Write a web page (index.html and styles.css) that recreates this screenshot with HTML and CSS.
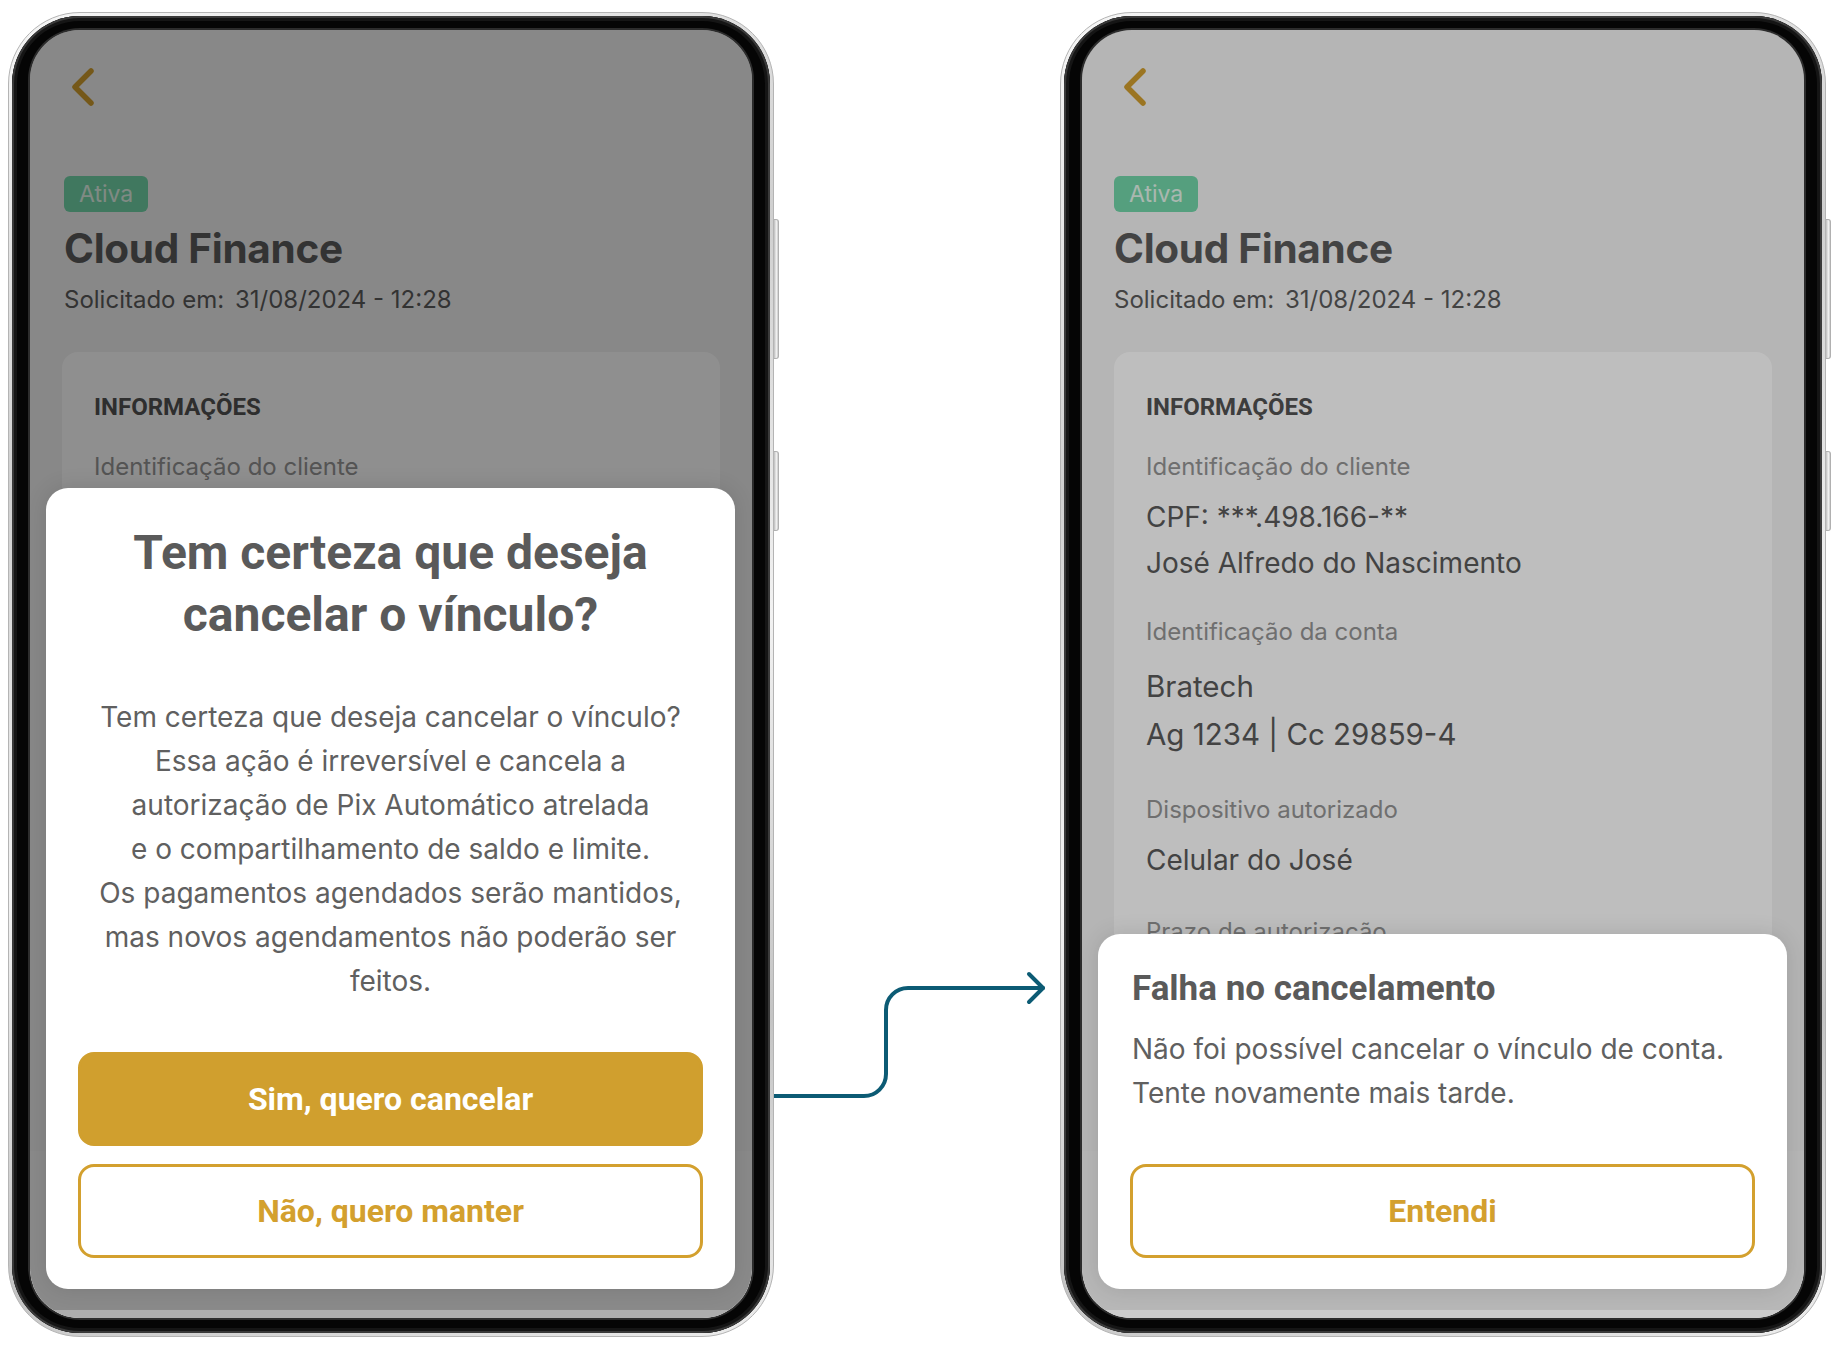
FILE: index.html
```html
<!DOCTYPE html>
<html lang="pt-BR">
<head>
<meta charset="utf-8">
<title>Cancelar vínculo</title>
<link rel="stylesheet" href="styles.css">
</head>
<body>
<div class="stage">
  <div class="phone">
    <span class="side-btn side-a"></span>
    <span class="side-btn side-b"></span>
    <div class="bezel">
      <div class="screen">
        <div class="content">
          <div class="topbar">
            <svg class="back" width="28" height="42" viewBox="0 0 28 42"><path d="M23 5 L7 21 L23 37" fill="none" stroke="#d09e2e" stroke-width="5.5" stroke-linecap="round" stroke-linejoin="round"/></svg>
          </div>
          <span class="badge">Ativa</span>
          <h1 class="title">Cloud Finance</h1>
          <p class="subtitle">Solicitado em: <span class="date">31/08/2024 - 12:28</span></p>
          <section class="card">
            <h2 class="card-title">INFORMAÇÕES</h2>
            <div class="group g1">
              <div class="label">Identificação do cliente</div>
              <div class="value">CPF: ***.498.166-**</div>
              <div class="value">José Alfredo do Nascimento</div>
            </div>
            <div class="group g2">
              <div class="label">Identificação da conta</div>
              <div class="value big">Bratech</div>
              <div class="value big">Ag 1234 | Cc 29859-4</div>
            </div>
            <div class="group g3">
              <div class="label">Dispositivo autorizado</div>
              <div class="value">Celular do José</div>
            </div>
            <div class="group g4">
              <div class="label">Prazo de autorização</div>
            </div>
          </section>
        </div>
        <div class="footer"></div>
        <div class="overlay dark"></div>
        <div class="sheet center">
          <h3 class="sheet-title big-title">Tem certeza que deseja<br>cancelar o vínculo?</h3>
          <p class="sheet-text spaced">Tem certeza que deseja cancelar o vínculo?<br>Essa ação é irreversível e cancela a<br>autorização de Pix Automático atrelada<br>e o compartilhamento de saldo e limite.<br>Os pagamentos agendados serão mantidos,<br>mas novos agendamentos não poderão ser<br>feitos.</p>
          <div class="actions">
            <button class="btn primary">Sim, quero cancelar</button>
            <button class="btn outline">Não, quero manter</button>
          </div>
        </div>
        <div class="home-strip"></div>
      </div>
    </div>
  </div>

  <div class="connector">
    <svg width="286" height="1325" viewBox="0 0 286 1325">
      <path d="M0 1084 H90 A22 22 0 0 0 112 1062 V998 A22 22 0 0 1 134 976 H269" fill="none" stroke="#0c5b74" stroke-width="4" stroke-linecap="round"/>
      <path d="M255 962 L269 976 L255 990" fill="none" stroke="#0c5b74" stroke-width="4" stroke-linecap="round" stroke-linejoin="round"/>
    </svg>
  </div>

  <div class="phone right">
    <span class="side-btn side-a"></span>
    <span class="side-btn side-b"></span>
    <div class="bezel">
      <div class="screen">
        <div class="content">
          <div class="topbar">
            <svg class="back" width="28" height="42" viewBox="0 0 28 42"><path d="M23 5 L7 21 L23 37" fill="none" stroke="#d09e2e" stroke-width="5.5" stroke-linecap="round" stroke-linejoin="round"/></svg>
          </div>
          <span class="badge">Ativa</span>
          <h1 class="title">Cloud Finance</h1>
          <p class="subtitle">Solicitado em: <span class="date">31/08/2024 - 12:28</span></p>
          <section class="card">
            <h2 class="card-title">INFORMAÇÕES</h2>
            <div class="group g1">
              <div class="label">Identificação do cliente</div>
              <div class="value">CPF: ***.498.166-**</div>
              <div class="value">José Alfredo do Nascimento</div>
            </div>
            <div class="group g2">
              <div class="label">Identificação da conta</div>
              <div class="value big">Bratech</div>
              <div class="value big">Ag 1234 | Cc 29859-4</div>
            </div>
            <div class="group g3">
              <div class="label">Dispositivo autorizado</div>
              <div class="value">Celular do José</div>
            </div>
            <div class="group g4">
              <div class="label">Prazo de autorização</div>
            </div>
          </section>
        </div>
        <div class="footer"></div>
        <div class="overlay light"></div>
        <div class="sheet">
          <h3 class="sheet-title small-title">Falha no cancelamento</h3>
          <p class="sheet-text tight">Não foi possível cancelar o vínculo de conta.<br>Tente novamente mais tarde.</p>
          <div class="actions">
            <button class="btn outline">Entendi</button>
          </div>
        </div>
        <div class="home-strip"></div>
      </div>
    </div>
  </div>
</div>
</body>
</html>
```

FILE: styles.css
```css
* { box-sizing: border-box; }

html, body {
  margin: 0;
  padding: 0;
  background: #ffffff;
}

body {
  font-family: "Inter", "Noto Sans", sans-serif;
  width: 1836px;
  height: 1348px;
  overflow: hidden;
}

.stage {
  display: flex;
  align-items: flex-start;
  padding: 12px 0 0 8px;
}

/* ---------- phone frame ---------- */
.phone {
  position: relative;
  width: 766px;
  height: 1325px;
  flex: none;
  border-radius: 72px;
  padding: 3px;
  border: 1px solid #b4b4b4;
  background: linear-gradient(160deg, #f6f6f6 0%, #cfcfcf 30%, #f2f2f2 55%, #c4c4c4 80%, #ededed 100%);
}

.side-btn {
  position: absolute;
  right: -6px;
  width: 5px;
  border-radius: 0 3px 3px 0;
  background: linear-gradient(90deg, #bcbcbc, #f2f2f2 60%, #c9c9c9);
  border: 1px solid #b0b0b0;
  border-left: none;
}
.side-a { top: 206px; height: 140px; }
.side-b { top: 438px; height: 80px; }

.bezel {
  height: 100%;
  border-radius: 68px;
  background: #050505;
  padding: 14px 18px 15px 18px;
  box-shadow: inset 0 0 0 2px #3a3a3a, inset 0 0 0 5px #151515;
}

.screen {
  position: relative;
  height: 100%;
  border-radius: 50px;
  overflow: hidden;
  background: #f3f3f3;
  box-shadow: 0 0 0 2px #2c2c2c;
}

/* ---------- screen content ---------- */
.content {
  padding: 0 32px 0 34px;
}
.phone.right .content { padding-left: 32px; }

.topbar {
  padding-top: 36px;
  height: 78px;
}
.back { display: block; margin-left: 4px; }
.phone.right .back { margin-left: 6px; }

.badge {
  display: inline-block;
  margin-top: 68px;
  height: 36px;
  line-height: 36px;
  padding: 0 15px;
  border-radius: 6px;
  background: #72d6a9;
  color: #e4f6ec;
  font-size: 23px;
}

.title {
  margin: 13px 0 0;
  font-size: 40.5px;
  line-height: 48px;
  font-weight: 700;
  color: #5b5b5b;
  letter-spacing: -0.3px;
}

.subtitle {
  margin: 12px 0 0;
  font-size: 24px;
  line-height: 30px;
  color: #5b5b5b;
}
.date { margin-left: 4px; }

.card {
  margin-top: 37px;
  margin-left: -2px;
  background: #ffffff;
  border-radius: 16px;
  padding: 41px 32px 200px;
}
.phone.right .card { margin-left: 0; }

.card-title {
  margin: 0;
  font-family: "Roboto", sans-serif;
  font-weight: 700;
  font-size: 24px;
  line-height: 28px;
  color: #525252;
}

.group { margin-top: 34px; }
.group.g1 { margin-top: 31px; }
.group.g2 { margin-top: 31px; }
.group.g3 { margin-top: 37px; }
.group.g4 { margin-top: 34px; }

.label {
  font-size: 24px;
  line-height: 30px;
  color: #969696;
  margin-bottom: 12px;
}
.g2 .label { margin-bottom: 15px; }

.value {
  font-size: 28px;
  line-height: 46px;
  color: #5a5a5a;
}
.value.big {
  font-size: 29.5px;
  line-height: 48px;
}

.footer {
  position: absolute;
  left: 0;
  right: 0;
  bottom: 0;
  height: 167px;
  background: #f6f6f6;
}

.overlay {
  position: absolute;
  inset: 0;
}
.overlay.dark { background: rgba(0, 0, 0, 0.44); }
.overlay.light { background: rgba(0, 0, 0, 0.255); }

.home-strip {
  position: absolute;
  left: 0;
  right: 0;
  bottom: 0;
  height: 8px;
  background: rgba(255, 255, 255, 0.3);
}

/* ---------- bottom sheet ---------- */
.sheet {
  position: absolute;
  left: 16px;
  right: 17px;
  bottom: 29px;
  background: #ffffff;
  border-radius: 22px;
  padding: 35px 32px 31px 34px;
  box-shadow: 0 0 22px rgba(0, 0, 0, 0.12);
}
.sheet.center {
  text-align: center;
  padding: 34px 32px 31px;
}

.sheet-title {
  margin: 0;
  font-family: "Roboto", sans-serif;
  font-weight: 700;
  color: #5a5a5a;
}
.big-title {
  font-size: 48px;
  line-height: 62px;
}
.small-title {
  font-size: 35px;
  line-height: 40px;
}

.sheet-text {
  margin: 0;
  font-size: 28px;
  line-height: 44px;
  color: #606060;
}
.sheet-text.spaced { margin-top: 49px; }
.sheet-text.tight { margin-top: 18px; }

.actions {
  margin-top: 49px;
  display: flex;
  flex-direction: column;
  gap: 18px;
}
.sheet .actions { margin-left: -2px; }
.sheet.center .actions { margin-left: 0; }

.btn {
  height: 94px;
  width: 100%;
  border-radius: 16px;
  font-family: "Roboto", sans-serif;
  font-weight: 700;
  font-size: 32px;
  cursor: pointer;
}
.btn.primary {
  background: #d09f2e;
  border: 3px solid #d09f2e;
  color: #ffffff;
}
.btn.outline {
  background: #ffffff;
  border: 3px solid #d3a02e;
  color: #d3a02e;
}

/* ---------- connector ---------- */
.connector {
  width: 286px;
  height: 1325px;
  flex: none;
}
.connector svg {
  display: block;
  overflow: visible;
}
```
